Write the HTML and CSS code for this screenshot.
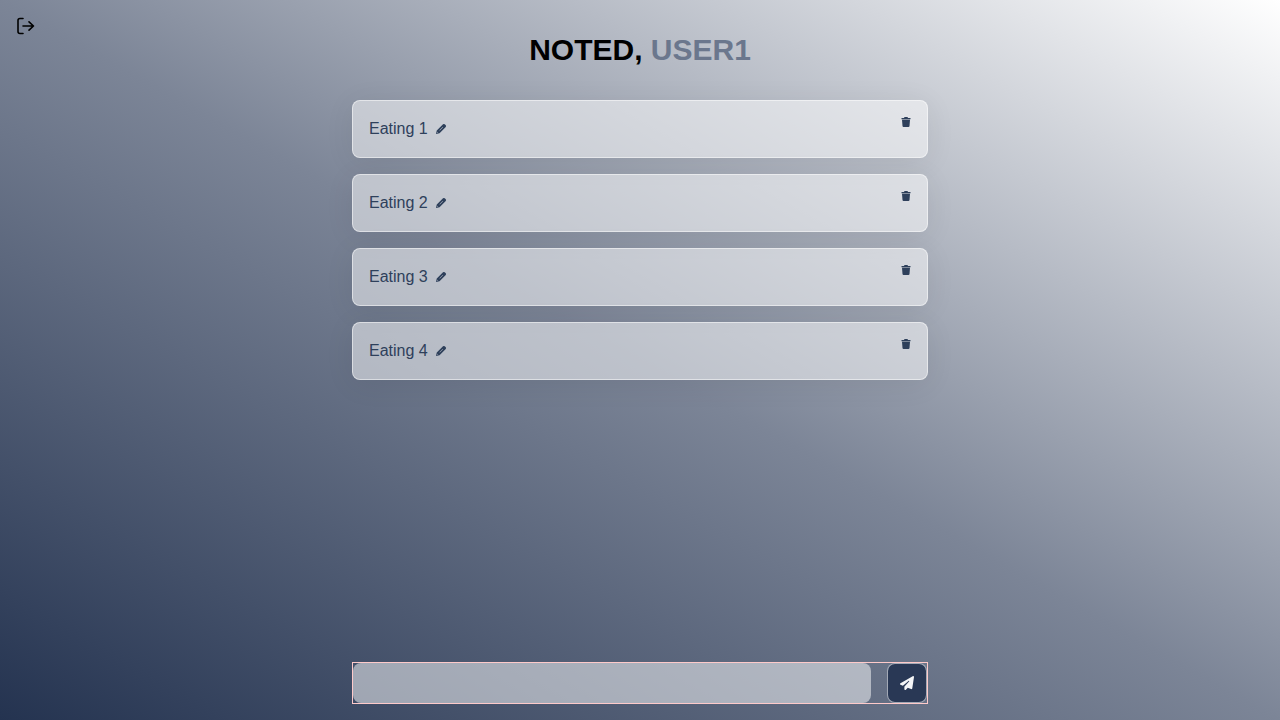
FILE: index.html
```html
<!DOCTYPE html>
<html lang="en">
<head>
<meta charset="utf-8">
<meta name="viewport" content="width=device-width, initial-scale=1">
<title>Noted</title>
<link rel="stylesheet" href="styles.css">
</head>
<body>
<svg class="sprite" aria-hidden="true">
  <symbol id="pencil" viewBox="0 0 24 24"><path fill="currentColor" fill-rule="evenodd" d="M2 22l1.500-7L16 2.500q1.800-1.500 3.500 0l2 2q1.500 1.700 0 3.500L9 20.500zM8.800 14.400l.8.8 6.500-6.500-.8-.8zM4.800 17.500l-.5 2.200 2.200-.5z"/></symbol>
  <symbol id="trash" viewBox="0 0 20 20"><path d="M1 2h5l1-2h6l1 2h5v2.400H1zM2 5.500h16L17 18q-.2 2-2 2H5q-1.800 0-2-2z" fill="currentColor"/></symbol>
</svg>
<button class="logout" type="button" aria-label="Log out">
  <svg viewBox="0 0 20 20" fill="none" stroke="currentColor" stroke-width="1.600" stroke-linecap="round" stroke-linejoin="round"><path d="M7 2.500H4Q2 2.500 2 4.500v11q0 2 2 2h3M7 10h10.500M13 5.800L17.500 10 13 14.200"/></svg>
</button>
<main class="page">
  <h1 class="title">NOTED, <span class="user">USER1</span></h1>
  <ul class="notes">
    <li class="note"><span class="text">Eating 1</span><button class="edit" type="button" aria-label="Edit Eating 1"><svg><use href="#pencil"/></svg></button><button class="delete" type="button" aria-label="Delete Eating 1"><svg><use href="#trash"/></svg></button></li>
    <li class="note"><span class="text">Eating 2</span><button class="edit" type="button" aria-label="Edit Eating 2"><svg><use href="#pencil"/></svg></button><button class="delete" type="button" aria-label="Delete Eating 2"><svg><use href="#trash"/></svg></button></li>
    <li class="note"><span class="text">Eating 3</span><button class="edit" type="button" aria-label="Edit Eating 3"><svg><use href="#pencil"/></svg></button><button class="delete" type="button" aria-label="Delete Eating 3"><svg><use href="#trash"/></svg></button></li>
    <li class="note"><span class="text">Eating 4</span><button class="edit" type="button" aria-label="Edit Eating 4"><svg><use href="#pencil"/></svg></button><button class="delete" type="button" aria-label="Delete Eating 4"><svg><use href="#trash"/></svg></button></li>
  </ul>
  <form class="composer">
    <input class="field" type="text" aria-label="New note">
    <button class="send" type="button" aria-label="Send"><svg viewBox="0 0 512 512" fill="currentColor"><path d="M498 6c11 7 16 20 14 33l-64 416c-2 20-24 32-44 24l-120-50-68 74c-20 20-56 8-56-21v-84c0-4 2-8 4-11L332 205c14-16-6-37-22-23L106 361 17 317C-5 305-6 276 16 264L464 8c11-6 24-6 34-2z"/></svg></button>
  </form>
</main>
</body>
</html>
```
FILE: styles.css
```css
* { box-sizing: border-box; }

body {
  margin: 0;
  min-height: 100vh;
  font-family: "Liberation Sans", Arial, sans-serif;
  font-size: 16px;
  line-height: 24px;
  background: linear-gradient(to top right, #243350, #7c8597, #ffffff);
}

button {
  display: flex;
  padding: 0;
  border: 0;
  background: none;
  color: inherit;
  cursor: pointer;
}

.sprite { position: absolute; width: 0; height: 0; }

.logout { position: absolute; top: 16px; left: 16px; color: #000; }
.logout svg { width: 20px; height: 20px; }

.page {
  display: flex;
  flex-direction: column;
  min-height: 100vh;
  width: 45%;
  margin: 0 auto;
  padding: 32px 0 16px;
}

.title {
  margin: 0 0 32px;
  font-size: 30px;
  line-height: 36px;
  font-weight: 700;
  text-align: center;
  color: #000;
}
.user { color: #6b778d; }

.notes {
  display: flex;
  flex: 1;
  flex-direction: column;
  gap: 16px;
  margin: 0;
  padding: 0 0 16px;
  list-style: none;
}

.note {
  display: flex;
  align-items: center;
  padding: 16px;
  border: 1px solid rgba(255, 255, 255, .5);
  border-radius: 8px;
  background: rgba(255, 255, 255, .5);
  box-shadow: 0 4px 30px rgba(0, 0, 0, .07);
  color: #2e405b;
}
.edit { margin-left: 7px; }
.edit svg { width: 12px; height: 12px; }
.delete { align-self: flex-start; margin-left: auto; }
.delete svg { width: 10px; height: 10px; }

.composer {
  display: flex;
  gap: 16px;
  border: 1px solid #fecaca;
}
.field {
  flex: 1;
  min-width: 0;
  height: 40px;
  padding: 8px 16px;
  border: 0;
  border-radius: 8px;
  background: rgba(255, 255, 255, .5);
  font: inherit;
  color: #243350;
}
.send {
  align-items: center;
  justify-content: center;
  width: 40px;
  height: 40px;
  border: 1px solid rgba(255, 255, 255, .4);
  border-radius: 8px;
  background: #293855;
  background-clip: padding-box;
  color: #f5f6f8;
}
.send svg { width: 14px; height: 14px; }
```
